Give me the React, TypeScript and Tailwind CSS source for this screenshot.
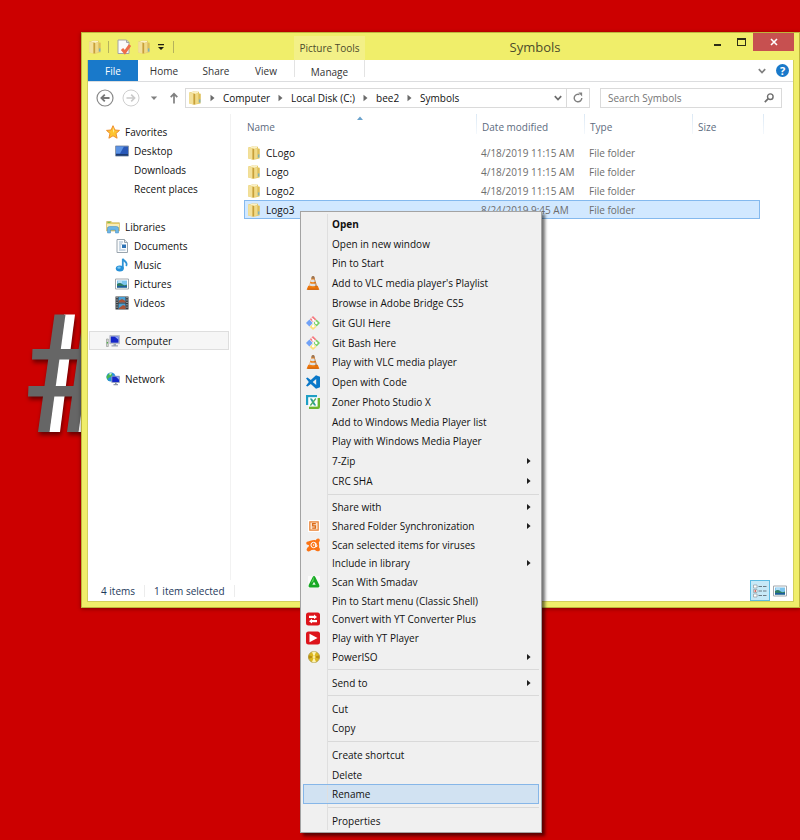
import type { ReactNode } from "react";
import clsx from "clsx";

/* ---------- icons ---------- */

function FolderIcon() {
  return (
    <svg viewBox="0 0 14 14" className="h-3.5 w-3.5 shrink-0" aria-hidden="true">
      <path d="M1.200 1.400 5.500.4 11 .8v2l1.600.2v9.400L6.200 13.800l-5-1.400z" fill="#e6cb69" />
      <path d="m1.200 1.400 4.300 1v11l-4.300-1z" fill="#f3e09a" />
      <path d="M2.500 1.300 6 .7l4 .3v1L7 3z" fill="#fbf1c6" />
      <path d="M5.500 2.600 7.300 3v10.300l-1.800.2z" fill="#c79f3a" />
      <path d="m7.300 3 3.200-.8v9.900l-3.200 1.200z" fill="#f0da88" />
      <path d="M10.500 2.600h2v6h-2z" fill="#dcbd58" />
      <path d="M10.800 8.400h1.700v3.200h-1.700z" fill="#7fb0b4" />
    </svg>
  );
}

function CheckedDocIcon() {
  return (
    <svg viewBox="0 0 14 16" className="h-4 w-3.5 shrink-0" aria-hidden="true">
      <path d="M1 1h8.500l2.500 2.500V14.500H1z" fill="#fafafa" stroke="#a4a4a4" />
      <path d="M9.500 1v2.500H12" fill="none" stroke="#a4a4a4" />
      <path d="m5 10 2.800 3.300L13 6" fill="none" stroke="#ee6e49" strokeWidth="3" />
    </svg>
  );
}

function StarIcon() {
  return (
    <svg viewBox="0 0 14 14" className="h-3.5 w-3.5" aria-hidden="true">
      <path
        d="m7 .7 1.900 4.300 4.600.4-3.500 3.100 1.100 4.700L7 10.800l-4.100 2.400L4 8.500.5 5.400l4.600-.4z"
        fill="#fdc52f"
        stroke="#ee8f2d"
      />
      <path d="m7 2.500 1.200 3.200L7 8z" fill="#ffec9c" />
    </svg>
  );
}

function DesktopIcon() {
  return (
    <svg viewBox="0 0 14 14" className="h-3.5 w-3.5" aria-hidden="true">
      <path d="M.5 2h13v10H.5z" fill="#2858b8" stroke="#8a99ad" />
      <path d="M1 2.500h8L5 9.500H1z" fill="#5c93e4" />
      <path d="M1 10.200h12v1.400H1z" fill="#18345f" />
    </svg>
  );
}

function LibrariesIcon() {
  return (
    <svg viewBox="0 0 14 14" className="h-3.5 w-3.5" aria-hidden="true">
      <path d="M.6 1.500h4.600l1 1.200h7.200V11H.6z" fill="#e9cf6c" stroke="#cbae4d" strokeWidth=".6" />
      <path d="M1.500 1.800h3v1h-3z" fill="#67b84a" />
      <path d="M1 4h12v3H1z" fill="#f9edb7" />
      <path d="M1.500 13V8.500q0-2 2-2h7q2 0 2 2V13h-3v-3h-5v3z" fill="#6db6e6" stroke="#3f89c4" strokeWidth=".5" />
    </svg>
  );
}

function DocumentIcon() {
  return (
    <svg viewBox="0 0 14 14" className="h-3.5 w-3.5" aria-hidden="true">
      <path d="M2 .5h7.500l3 3v10H2z" fill="#fbfcfd" stroke="#9aa5ae" />
      <path d="M9.500.5v3h3" fill="#dbe2e8" stroke="#9aa5ae" />
      <path d="M4 3h4M4 5h3M4 7h2M4 9h2M4 11h6.500" stroke="#9db5cb" />
      <path d="M7 5.500h4V9H7z" fill="#2d72b5" />
    </svg>
  );
}

function MusicIcon() {
  return (
    <svg viewBox="0 0 14 14" className="h-3.5 w-3.5" aria-hidden="true">
      <path d="M7.800 10.500V.8c.6 2.200 5.400 3 3.400 7.200" fill="none" stroke="#2f93d6" strokeWidth="1.800" />
      <ellipse cx="4.800" cy="10.500" rx="4" ry="3" fill="#2590d8" />
      <ellipse cx="4" cy="9.700" rx="1.800" ry="1.100" fill="#7fc8f2" />
    </svg>
  );
}

function PictureIcon() {
  return (
    <svg viewBox="0 0 14 14" className="h-3.5 w-3.5" aria-hidden="true">
      <path d="M.5 2h13v10H.5z" fill="#fff" stroke="#a3a9ae" />
      <path d="M2 3.500h10v7H2z" fill="#7cc4ee" />
      <path d="M2 7q3-2 5 0t5 .5v3H2z" fill="#2f7d65" />
      <path d="M2 9h10v1.500H2z" fill="#1e5aa0" />
      <path d="M3 4.500h4v1H3z" fill="#e8f6fd" />
    </svg>
  );
}

function VideoIcon() {
  return (
    <svg viewBox="0 0 14 14" className="h-3.5 w-3.5" aria-hidden="true">
      <path d="M.5.5h13v13H.5z" fill="#35393d" />
      <path d="M3.500 1h7v5.500h-7zM3.500 7.500h7V13h-7z" fill="#4aa0d4" />
      <path d="M4 4.500 7 3l3.500 2v1.500H3.500zM4 12l4-3 2.500 1v3H4z" fill="#a85236" />
      <path d="M2 1v12M12 1v12" stroke="#d7dde1" strokeDasharray="1.200 1.200" />
    </svg>
  );
}

function ComputerIcon() {
  return (
    <svg viewBox="0 0 14 14" className="h-3.5 w-3.5" aria-hidden="true">
      <path d="M.5 5h1.800v7.500H.5z" fill="#d7dad7" stroke="#8b908b" strokeWidth=".6" />
      <path d="M.8 8h1.200v1.500H.8z" fill="#51b04a" />
      <path d="M3.800 1.500h9.700v8.200H3.800z" fill="#c5cbd8" stroke="#9da5b5" strokeWidth=".6" />
      <path d="M4.800 2.500h7.700v6.200H4.800z" fill="#1426c8" />
      <path d="M8.500 2.500h4v3.200z" fill="#93a8f4" />
      <path d="M7.500 9.800h2.500v1.500h2v1.200H5.500v-1.200h2z" fill="#9ba3b2" />
    </svg>
  );
}

function NetworkIcon() {
  return (
    <svg viewBox="0 0 14 14" className="h-3.5 w-3.5" aria-hidden="true">
      <circle cx="5" cy="5" r="4.600" fill="#2a8fe0" />
      <path d="M2 2.500Q5 0 6 2T3.500 5.500 4.500 9Q.5 8 .6 4.500z" fill="#46b84f" />
      <path d="M3 1.600q2-1 3 0L4 3.500z" fill="#c9f0d0" />
      <path d="M5.800 4.200h7.700v6.300H5.800z" fill="#1527c9" stroke="#a5adbc" strokeWidth=".8" />
      <path d="M10 4.700h3v3z" fill="#8fa5f2" />
      <path d="M9 10.500h1.600V12H12v1.200H7.500V12H9z" fill="#8f97a6" />
    </svg>
  );
}

function VlcIcon() {
  return (
    <svg viewBox="0 0 14 14" className="h-3.5 w-3.5" aria-hidden="true">
      <path d="M2.300 9.800h9.400l1.700 4H.6z" fill="#ee7409" />
      <path d="M2 12.800h10.200l.6 1H1.200z" fill="#c9600c" />
      <path d="M6 .2h2l3.200 10.600q-4.200 1.900-8.400 0z" fill="#f08014" />
      <path d="M6 .2h2l.7 2.200H5.300z" fill="#8f7a68" />
      <path d="M5 3.400 4.300 5.800q2.700.9 5.400 0L9 3.400zM3.900 7.200l-.7 2.400q3.800 1.400 7.600 0l-.7-2.400q-3.100 1-6.200 0z" fill="#dfe3e6" />
      <path d="M7.500.2H8l3.200 10.600-1.800.6z" fill="#9a5a2a" opacity=".45" />
    </svg>
  );
}

function GitIcon() {
  return (
    <svg viewBox="0 0 14 14" className="h-3.5 w-3.5" aria-hidden="true">
      <path d="M7 0 10.300 3.300 8.300 5.600 7 6.200 3.800 3.200z" fill="#f47a80" />
      <path d="M3.400 3.500 6.700 7l-3.300 3.500L0 7z" fill="#71a2f7" />
      <path d="M10.600 3.500 14 7l-3.400 3.500L7.400 7z" fill="#77d165" />
      <path d="M7 7.700 10.300 11 7 14l-3.300-3z" fill="#fbdf78" />
      <path d="M5.300 1.600 7.200 3.500V10M7.200 3.500l2.800 3" fill="none" stroke="#f7f7f7" strokeWidth="1.100" />
      <circle cx="7.200" cy="3.900" r="1" fill="#fff" />
      <circle cx="7.200" cy="10.300" r="1.200" fill="#fff" />
      <circle cx="10.300" cy="7" r="1.200" fill="#fff" />
    </svg>
  );
}

function CodeIcon() {
  return (
    <svg viewBox="0 0 14 14" className="h-3.5 w-3.5" aria-hidden="true">
      <path
        d="M10 .2 14 1.800v10.400l-4 1.600L4.800 8.900 1.500 11.500 0 10.700 2.800 7 0 3.300l1.500-.8 3.300 2.600zM10.200 4 6.700 7l3.500 3z"
        fill="#0a78c8"
        fillRule="evenodd"
      />
    </svg>
  );
}

function ZonerIcon() {
  return (
    <svg viewBox="0 0 14 14" className="h-3.5 w-3.5" aria-hidden="true">
      <path d="M0 0h11v3H3v7H0z" fill="#1f9fc4" />
      <path d="M14 3v9q0 2-2 2H3v-3h8V3z" fill="#6cb52d" />
      <path d="M2.200 2.200h9.400v9.400H2.200z" fill="#fff" />
      <path d="M3.800 3.500h2.200l4.200 7H8z" fill="#2a9c95" />
      <path d="m9.800 3.500-5.400 7" stroke="#4fae62" strokeWidth="1.400" />
    </svg>
  );
}

function SharedFolderIcon() {
  return (
    <svg viewBox="0 0 14 14" className="h-3.5 w-3.5" aria-hidden="true">
      <path d="M2 1h12v12H2z" fill="#fff" />
      <path d="M3.800 2.800h8.400v8.400H3.800z" fill="#fbe3cd" stroke="#e98133" strokeWidth="1.200" />
      <path d="M9.800 4.700H6.700v2.200h2.700v2.300H6.200" fill="none" stroke="#dd6a16" strokeWidth="1.300" />
    </svg>
  );
}

function AvastIcon() {
  return (
    <svg viewBox="0 0 14 14" className="h-3.5 w-3.5" aria-hidden="true">
      <path
        d="M4.300 2.800Q8 1.500 9.800 2.300 10.600.2 12.300.4T13.800 2.800l-1 1.800q.6 2.400.2 4.600 1.200 1.300.8 3t-3.300.8L8.500 11.800l-3 .1q-2 2-3.800 1.300T1 10.500q.2-1.200 1.500-1.500L3 7Q.2 7.200.2 5.200T2.200 3.400z"
        fill="#fb7314"
      />
      <circle cx="7.600" cy="7" r="2.700" fill="none" stroke="#fff" />
      <path d="M8.600 5.300H9.700V8.700q1.500.2 1.500-1.200" fill="none" stroke="#fff" />
      <circle cx="7.600" cy="7" r=".8" fill="#fff" />
    </svg>
  );
}

function SmadavIcon() {
  return (
    <svg viewBox="0 0 14 14" className="h-3.5 w-3.5" aria-hidden="true">
      <path d="M2 1h12v12H2z" fill="#fafafa" />
      <path d="M8 1q.8 0 1.300 1l4 8q.7 2-1 2.500H3.700q-1.700-.5-1-2.500l4-8Q7.200 1 8 1z" fill="#17a824" />
      <path d="M8 6.800 9.700 9.800H6.300z" fill="#eaf8e9" />
      <path d="M8 1.600 5 8l2.500-2z" fill="#5fdb61" />
    </svg>
  );
}

function ConvertIcon() {
  return (
    <svg viewBox="0 0 14 14" className="h-3.5 w-3.5" aria-hidden="true">
      <rect y=".5" width="14" height="13" rx="2.500" fill="#dd141b" />
      <path d="M3 3.800h5V2.500l3 2.500-3 2.300V6H3zM11 8h-5V6.800L3 9.300l3 2.300v-1.300h5z" fill="#fff" />
    </svg>
  );
}

function PlayIcon() {
  return (
    <svg viewBox="0 0 14 14" className="h-3.5 w-3.5" aria-hidden="true">
      <rect y=".5" width="14" height="13" rx="2.500" fill="#dd141b" />
      <path d="M3.500 2.800 11.500 7l-8 4.200z" fill="#fff" />
    </svg>
  );
}

function DiscIcon() {
  return (
    <svg viewBox="0 0 14 14" className="h-3.5 w-3.5" aria-hidden="true">
      <circle cx="8" cy="7" r="5.600" fill="#dcb820" stroke="#a89a55" strokeWidth=".7" />
      <path d="M8 7 6 1.900q2-.7 4 0zM8 7l-2 5.100q2 .7 4 0z" fill="#fdf3b4" />
      <path d="M8 7 2.800 5.300q-.6 1.700 0 3.400zM8 7l5.200-1.700q.6 1.700 0 3.400z" fill="#b98d10" />
      <circle cx="8" cy="7" r="1.600" fill="#f7dd62" />
      <circle cx="8" cy="7" r=".7" fill="#fff" />
    </svg>
  );
}

function Crumb() {
  return (
    <svg viewBox="0 0 21 8" className="h-2 w-[21px] shrink-0" aria-hidden="true">
      <path d="m8.500.8 4 3.200-4 3.200z" fill="#6a6a6a" />
    </svg>
  );
}

function CaretDown() {
  return (
    <svg viewBox="0 0 8 6" className="h-1.5 w-2" aria-hidden="true">
      <path d="m.8 1.200 3.200 3.300 3.200-3.300" fill="none" stroke="currentColor" strokeWidth="1.700" />
    </svg>
  );
}

/* ---------- data ---------- */

type NavEntry = { label: string; icon?: ReactNode; child?: boolean; active?: boolean };

const navGroups: NavEntry[][] = [
  [
    { label: "Favorites", icon: <StarIcon /> },
    { label: "Desktop", icon: <DesktopIcon />, child: true },
    { label: "Downloads", child: true },
    { label: "Recent places", child: true },
  ],
  [
    { label: "Libraries", icon: <LibrariesIcon /> },
    { label: "Documents", icon: <DocumentIcon />, child: true },
    { label: "Music", icon: <MusicIcon />, child: true },
    { label: "Pictures", icon: <PictureIcon />, child: true },
    { label: "Videos", icon: <VideoIcon />, child: true },
  ],
  [{ label: "Computer", icon: <ComputerIcon />, active: true }],
  [{ label: "Network", icon: <NetworkIcon /> }],
];

const files = [
  { name: "CLogo", date: "4/18/2019 11:15 AM" },
  { name: "Logo", date: "4/18/2019 11:15 AM" },
  { name: "Logo2", date: "4/18/2019 11:15 AM" },
  { name: "Logo3", date: "8/24/2019 9:45 AM", selected: true },
];

type MenuEntry = { label: string; icon?: ReactNode; bold?: boolean; more?: boolean; hover?: boolean };

const menuGroups: { height: string; items: MenuEntry[] }[] = [
  {
    height: "h-[277px]",
    items: [
      { label: "Open", bold: true },
      { label: "Open in new window" },
      { label: "Pin to Start" },
      { label: "Add to VLC media player's Playlist", icon: <VlcIcon /> },
      { label: "Browse in Adobe Bridge CS5" },
      { label: "Git GUI Here", icon: <GitIcon /> },
      { label: "Git Bash Here", icon: <GitIcon /> },
      { label: "Play with VLC media player", icon: <VlcIcon /> },
      { label: "Open with Code", icon: <CodeIcon /> },
      { label: "Zoner Photo Studio X", icon: <ZonerIcon /> },
      { label: "Add to Windows Media Player list" },
      { label: "Play with Windows Media Player" },
      { label: "7-Zip", more: true },
      { label: "CRC SHA", more: true },
    ],
  },
  {
    height: "h-[168px]",
    items: [
      { label: "Share with", more: true },
      { label: "Shared Folder Synchronization", icon: <SharedFolderIcon />, more: true },
      { label: "Scan selected items for viruses", icon: <AvastIcon /> },
      { label: "Include in library", more: true },
      { label: "Scan With Smadav", icon: <SmadavIcon /> },
      { label: "Pin to Start menu (Classic Shell)" },
      { label: "Convert with YT Converter Plus", icon: <ConvertIcon /> },
      { label: "Play with YT Player", icon: <PlayIcon /> },
      { label: "PowerISO", icon: <DiscIcon />, more: true },
    ],
  },
  { height: "h-[19px]", items: [{ label: "Send to", more: true }] },
  { height: "h-[39px]", items: [{ label: "Cut" }, { label: "Copy" }] },
  {
    height: "h-[59px]",
    items: [{ label: "Create shortcut" }, { label: "Delete" }, { label: "Rename", hover: true }],
  },
  { height: "h-[19px]", items: [{ label: "Properties" }] },
];

/* ---------- window parts ---------- */

function TitleBar() {
  return (
    <header className="flex h-[27px] text-[#4c4b2c]">
      <div className="flex w-[207px] items-center pl-px">
        <FolderIcon />
        <span className="ml-1.5 h-3 w-px bg-[#b5b25c]" />
        <button type="button" aria-label="Properties" className="ml-2">
          <CheckedDocIcon />
        </button>
        <button type="button" aria-label="New folder" className="ml-1.5">
          <FolderIcon />
        </button>
        <button type="button" aria-label="Customize toolbar" className="ml-1.5">
          <svg viewBox="0 0 8 8" className="h-2 w-2" aria-hidden="true">
            <path d="M1 1h6v1.200H1zM1 4h6L4 7z" fill="#1d1d12" />
          </svg>
        </button>
        <span className="ml-2 h-3 w-px bg-[#b5b25c]" />
      </div>
      <div className="mt-[3px] flex w-[71px] items-center justify-center bg-[#f3f087]">Picture Tools</div>
      <h1 className="flex flex-1 items-center justify-center text-[13px]">Symbols</h1>
      <div className="flex h-[18px]">
        <button type="button" aria-label="Minimize" className="flex w-6 items-end justify-center pb-[5px]">
          <span className="h-0.5 w-[7px] bg-[#2d2d16]" />
        </button>
        <button type="button" aria-label="Maximize" className="flex w-6 items-center justify-center">
          <span className="h-2 w-[9px] border border-t-2 border-[#2d2d16]" />
        </button>
        <button type="button" aria-label="Close" className="flex w-[41px] items-center justify-center bg-[#c75050]">
          <svg viewBox="0 0 8 8" className="h-2 w-2" aria-hidden="true">
            <path d="m1 1 6 6M7 1 1 7" stroke="#fff" strokeWidth="1.600" />
          </svg>
        </button>
      </div>
    </header>
  );
}

function Ribbon() {
  return (
    <div className="flex h-[22px] border-b border-[#dcdddf] text-[#333]">
      <button type="button" className="w-[50px] bg-[#1979ca] text-white">
        File
      </button>
      <button type="button" className="w-[52px]">
        Home
      </button>
      <button type="button" className="w-[52px]">
        Share
      </button>
      <button type="button" className="mr-1 w-12">
        View
      </button>
      <button type="button" className="mb-1 w-[71px] border-x border-[#e3e3e3] pt-1">
        Manage
      </button>
      <div className="flex flex-1 items-center justify-end gap-2.5 pr-1">
        <button type="button" aria-label="Expand the ribbon" className="text-[#808080]">
          <CaretDown />
        </button>
        <button
          type="button"
          aria-label="Help"
          className="flex h-[13px] w-[13px] items-center justify-center rounded-full bg-[#1979ca] text-[11px] font-bold text-white"
        >
          ?
        </button>
      </div>
    </div>
  );
}

function AddressRow() {
  return (
    <div className="flex h-8 items-center pr-[11px] pl-2">
      <button type="button" aria-label="Back">
        <svg viewBox="0 0 18 18" className="h-[18px] w-[18px]" aria-hidden="true">
          <circle cx="9" cy="9" r="8" fill="none" stroke="#8a8a8a" strokeWidth="1.200" />
          <path d="M13.500 9H5.500M8.800 5.600 5.400 9l3.400 3.400" fill="none" stroke="#777" strokeWidth="1.800" />
        </svg>
      </button>
      <button type="button" aria-label="Forward" className="ml-2">
        <svg viewBox="0 0 18 18" className="h-[18px] w-[18px]" aria-hidden="true">
          <circle cx="9" cy="9" r="8" fill="none" stroke="#cfcfcf" />
          <path d="M4.500 9h8M9.200 5.600 12.600 9l-3.400 3.400" fill="none" stroke="#cacaca" strokeWidth="1.600" />
        </svg>
      </button>
      <button type="button" aria-label="Recent locations" className="ml-2.5">
        <svg viewBox="0 0 8 5" className="h-[5px] w-2" aria-hidden="true">
          <path d="M.8.5h6.400L4 4z" fill="#808080" />
        </svg>
      </button>
      <button type="button" aria-label="Up" className="ml-2.5">
        <svg viewBox="0 0 12 12" className="h-3 w-3" aria-hidden="true">
          <path d="M6 11.500V2M2.700 5.200 6 1.800l3.300 3.400" fill="none" stroke="#808080" strokeWidth="1.700" />
        </svg>
      </button>
      <div className="ml-[5px] flex h-5 flex-1 items-center border border-[#dadada] pl-0.5">
        <FolderIcon />
        <Crumb />
        <span>Computer</span>
        <Crumb />
        <span>Local Disk (C:)</span>
        <Crumb />
        <span>bee2</span>
        <Crumb />
        <span>Symbols</span>
        <button type="button" aria-label="Previous locations" className="mr-1 ml-auto text-[#6c6c6c]">
          <CaretDown />
        </button>
        <button
          type="button"
          aria-label="Refresh"
          className="flex h-full w-[23px] items-center justify-center border-l border-[#dadada]"
        >
          <svg viewBox="0 0 12 12" className="h-3 w-3" aria-hidden="true">
            <path d="M7.500 2.500A3.800 3.800 0 1 0 9.800 6" fill="none" stroke="#808080" strokeWidth="1.400" />
            <path d="M6.400.6h3.700v4z" fill="#808080" />
          </svg>
        </button>
      </div>
      <label className="ml-2.5 flex h-5 w-[182px] items-center border border-[#dadada] pr-1.5 pl-[7px]">
        <input
          type="text"
          aria-label="Search Symbols"
          placeholder="Search Symbols"
          className="min-w-0 flex-1 outline-none placeholder:text-[#757575]"
        />
        <svg viewBox="0 0 12 12" className="h-3 w-3" aria-hidden="true">
          <circle cx="7.300" cy="4.700" r="2.800" fill="none" stroke="#6e6e6e" strokeWidth="1.400" />
          <path d="M5.200 6.700 1.800 10.200" stroke="#6e6e6e" strokeWidth="1.700" />
        </svg>
      </label>
    </div>
  );
}

function NavPane() {
  return (
    <nav className="flex w-[143px] shrink-0 flex-col gap-[19px] border-r border-[#f2f2f2] px-px pt-2">
      {navGroups.map((group) => (
        <ul key={group[0].label}>
          {group.map((entry) => (
            <li key={entry.label}>
              <a
                href="#"
                className={clsx(
                  "flex h-[19px] items-center border",
                  entry.child ? "pl-[25px]" : "pl-4",
                  entry.active ? "border-[#dedede] bg-[#f6f6f6]" : "border-transparent",
                )}
              >
                <span className="mr-[5px] h-3.5 w-3.5">{entry.icon}</span>
                {entry.label}
              </a>
            </li>
          ))}
        </ul>
      ))}
    </nav>
  );
}

function HeaderCell({ label, first, sorted }: { label: string; first?: boolean; sorted?: boolean }) {
  return (
    <th className="relative p-0 align-top font-normal text-[#5d6b80]">
      <div className="flex h-[25px] items-center">
        <span
          className={clsx(
            "mr-[5px] h-5 w-px self-start",
            first ? "-ml-[3px]" : "bg-linear-to-b from-[#dce9f5] to-[#f4f8fc]",
          )}
        />
        {label}
      </div>
      {sorted && (
        <svg viewBox="0 0 6 4" className="absolute top-0.5 left-1/2 h-1 w-1.5 -translate-x-1/2" aria-hidden="true">
          <path d="M0 4 3 .5 6 4z" fill="#6aa2cc" />
        </svg>
      )}
    </th>
  );
}

function FileList() {
  return (
    <main className="min-w-0 flex-1 pl-[13px]">
      <table className="w-[520px] table-fixed border-collapse text-left">
        <colgroup>
          <col className="w-[232px]" />
          <col className="w-[108px]" />
          <col className="w-[108px]" />
          <col className="w-[68px]" />
          <col className="w-1" />
        </colgroup>
        <thead>
          <tr className="h-[29px]">
            <HeaderCell label="Name" first sorted />
            <HeaderCell label="Date modified" />
            <HeaderCell label="Type" />
            <HeaderCell label="Size" />
            <td className="p-0 align-top">
              <div className="ml-auto h-5 w-px bg-linear-to-b from-[#dce9f5] to-[#f4f8fc]" />
            </td>
          </tr>
        </thead>
        <tbody>
          {files.map((file) => (
            <tr key={file.name} className="h-[19px] text-[#6d6d6d]">
              <td className="p-0" colSpan={4}>
                <div
                  className={clsx(
                    "grid h-[19px] grid-cols-[231px_108px_1fr] items-center border",
                    file.selected ? "border-[#84b9ee] bg-[#d1e8ff]" : "border-transparent",
                  )}
                >
                  <span className="flex items-center gap-[5px] pl-0.5 text-[#111]">
                    <FolderIcon />
                    {file.name}
                  </span>
                  <span className="pl-[5px]">{file.date}</span>
                  <span className="pl-[5px]">File folder</span>
                </div>
              </td>
            </tr>
          ))}
        </tbody>
      </table>
    </main>
  );
}

function StatusBar() {
  return (
    <footer className="flex h-[21px] items-center pr-1.5 pl-[13px] text-[#1e395b]">
      <span>4 items</span>
      <span className="mx-[9px] h-3 w-px bg-[#ececec]" />
      <span>1 item selected</span>
      <span className="mx-[9px] h-3 w-px bg-[#ececec]" />
      <button
        type="button"
        aria-label="Details view"
        className="ml-auto flex h-full w-5 items-center justify-center border border-[#5dbce3] bg-[#c7e9f7]"
      >
        <svg viewBox="0 0 14 14" className="h-3.5 w-3.5" aria-hidden="true">
          <path d="M.5 1h3.500v3H.5zM.5 5.500h3.500v3H.5zM.5 10h3.500v3H.5z" fill="#fff" stroke="#8f999e" strokeWidth=".7" />
          <path d="M1.500 6.300h1.500v1.500H1.500z" fill="#cf3c2f" />
          <path d="M5.500 2.500h3.500M10 2.500h3.500M5.500 7h3.500M10 7h3.500M5.500 11.500h3.500M10 11.500h3.500" stroke="#6c7b84" />
        </svg>
      </button>
      <button type="button" aria-label="Thumbnail view" className="ml-[3px]">
        <PictureIcon />
      </button>
    </footer>
  );
}

function ContextMenu() {
  return (
    <div
      role="menu"
      className="absolute top-[211px] left-[300px] w-[242px] border border-[#a3a3a3] bg-[#f0f0f0] px-0.5 py-0.5 shadow-[3px_3px_3px_rgba(0,0,0,0.55)]"
    >
      {menuGroups.map((group, index) => (
        <div key={group.items[0].label}>
          {index > 0 && (
            <div role="separator" className="flex h-[7px] items-center">
              <span className="h-full w-[25px] border-r border-[#dfdfdf]" />
              <span className="h-px flex-1 bg-[#d9d9d9]" />
            </div>
          )}
          <div className={clsx("flex flex-col", group.height)}>
            {group.items.map((item) => (
              <button
                key={item.label}
                type="button"
                role="menuitem"
                className={clsx(
                  "flex min-h-0 flex-1 items-center text-left",
                  item.bold && "font-bold",
                  item.hover && "bg-[#d1e2f2] outline outline-[#86b6e8] -outline-offset-1",
                )}
              >
                <span className="flex h-full w-[25px] items-center border-r border-[#dfdfdf] pl-[3px]">
                  {item.icon}
                </span>
                <span className="flex-1 pl-1 whitespace-nowrap">{item.label}</span>
                {item.more && (
                  <svg viewBox="0 0 4 8" className="mr-2 h-2 w-1" aria-hidden="true">
                    <path d="M0 1v6l3.600-3z" fill="#1e1e1e" />
                  </svg>
                )}
              </button>
            ))}
          </div>
        </div>
      ))}
    </div>
  );
}

function WallpaperHash() {
  return (
    <svg
      viewBox="0 0 90 130"
      className="absolute top-[310px] left-5 h-[130px] w-[90px] drop-shadow-[1px_3px_2px_rgba(0,0,0,0.5)]"
      aria-hidden="true"
    >
      <path d="M44 4.500h11L40 122H29z" fill="#fff" />
      <path d="M34.500 4.500H45.500L29.500 122H18z" fill="#666" />
      <path d="M74 4.500h11L69 122H58z" fill="#fff" />
      <path d="M63.500 4.500H75L58.500 122H47z" fill="#666" />
      <path d="M12.500 39H86v10.500H12zM8.500 76H82v10.500H8z" fill="#666" />
    </svg>
  );
}

export default function App() {
  return (
    <div className="relative min-h-screen overflow-hidden bg-[#cc0000] pt-8 pl-[81px] font-['Open_Sans','Liberation_Sans',sans-serif] text-[10px] leading-4 text-[#111]">
      <WallpaperHash />
      <section className="relative border border-[#bdb53d] bg-[#f0ee6a] pr-[5px] pb-[5px] pl-[5px] shadow-[0_1px_4px_rgba(0,0,0,0.4)]">
        <TitleBar />
        <div className="flex min-h-[542px] flex-col border border-t-0 border-[#d3d05a] bg-white">
          <Ribbon />
          <AddressRow />
          <div className="flex flex-1">
            <NavPane />
            <FileList />
          </div>
          <StatusBar />
        </div>
      </section>
      <ContextMenu />
    </div>
  );
}
